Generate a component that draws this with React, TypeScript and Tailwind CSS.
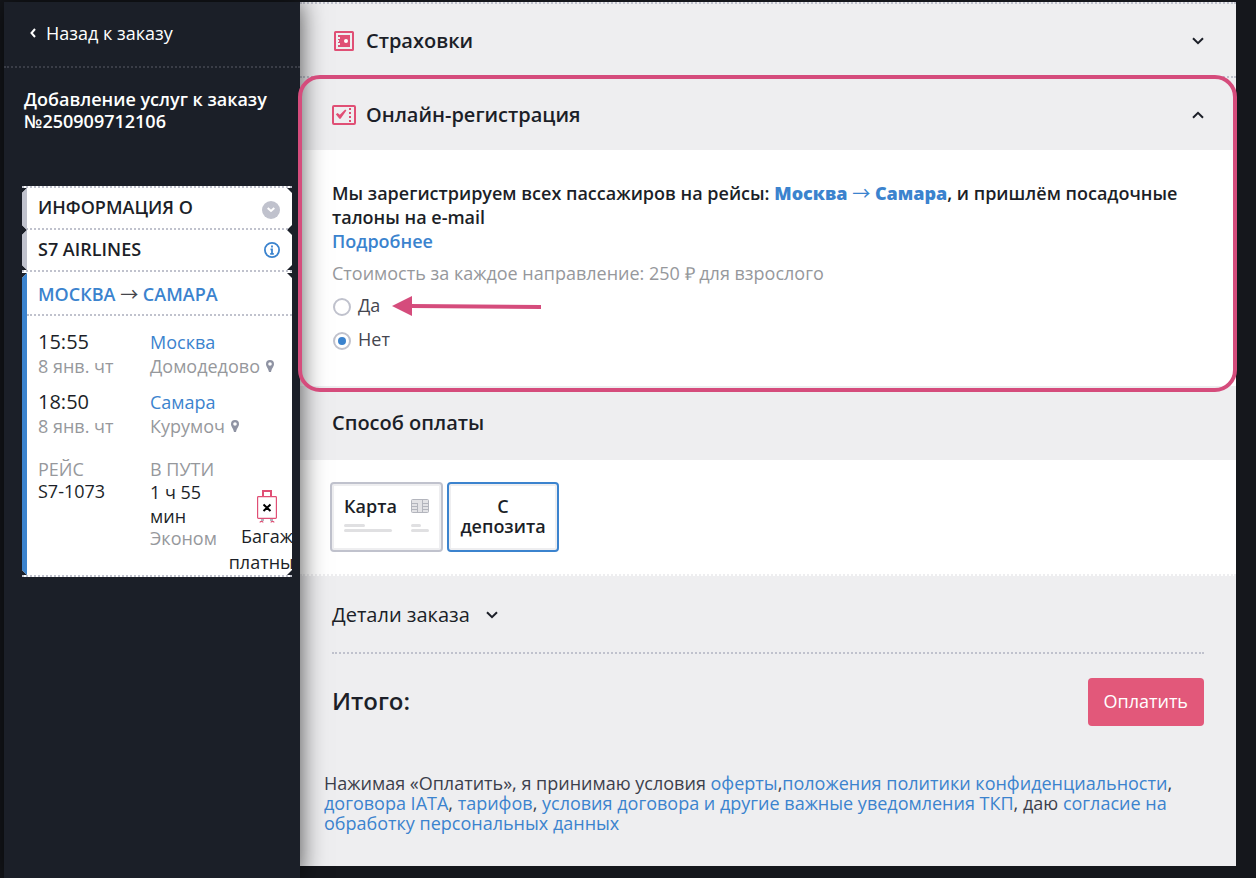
import { useState, type ReactNode } from "react";

function Chevron({ className = "" }: { className?: string }) {
  return (
    <svg viewBox="0 0 12 8" className={className} fill="none" stroke="currentColor" strokeWidth="2">
      <path d="M1 1.2l5 5 5-5" />
    </svg>
  );
}

function InsuranceIcon() {
  return (
    <svg viewBox="0 0 20 20" className="h-5 w-5">
      <rect x="1" y="1" width="18" height="18" rx="0.6" fill="none" stroke="#e04f75" strokeWidth="2" />
      <path d="M4 4h12v12H4v-2h2v-2H4v-1h1V9H4V8h2V6H4z" fill="#e04f75" />
      <circle cx="12" cy="10" r="2" fill="#fff" />
    </svg>
  );
}

function CheckInIcon() {
  return (
    <svg viewBox="0 0 24 20" className="h-5 w-6">
      <rect x="1" y="1" width="22" height="18" rx="1" fill="none" stroke="#e04f75" strokeWidth="2" />
      <path d="M3.8 9.3l1.8-1.2L7.8 9.8l5.400-5.200 1.200.8-5.800 8.400H7.400z" fill="#e04f75" />
      <path d="M17 3h2v2h-2zM17 7h2v2h-2zM17 11h2v2h-2zM17 15h2v2h-2z" fill="#e04f75" />
    </svg>
  );
}

function PinIcon() {
  return (
    <svg viewBox="0 0 8 12" className="h-3 w-2 shrink-0">
      <path
        fillRule="evenodd"
        d="M4 0a4 4 0 0 0-4 4c0 2.600 2 3.800 3 8h2c1-4.200 3-5.400 3-8a4 4 0 0 0-4-4zm0 2.200a1.800 1.800 0 1 1 0 3.600 1.800 1.800 0 0 1 0-3.600z"
        fill="#8f93a3"
      />
    </svg>
  );
}

function BaggageIcon() {
  return (
    <svg viewBox="0 0 20 33" className="h-[33px] w-5 shrink-0" fill="none">
      <path d="M6 6V1h8v5" stroke="#e04f75" strokeWidth="2" />
      <rect x="0.6" y="6.6" width="18.8" height="21.8" rx="0.8" stroke="#e04f75" strokeWidth="1.2" />
      <path d="M3 32.500c0-1.600 3-1.600 3 0M14 32.500c0-1.600 3-1.600 3 0" stroke="#e04f75" strokeWidth="1.2" />
      <path d="M4 30h3M13 30h3" stroke="#9a9aa8" strokeWidth="1.6" />
      <path d="M6.500 14.600l7 6.400M13.500 14.600l-7 6.400" stroke="#000" strokeWidth="2" />
    </svg>
  );
}

function ChipIcon() {
  return (
    <svg viewBox="0 0 18 14" className="h-[14px] w-[18px] shrink-0" fill="none" stroke="#b3b5bd">
      <rect x="0.5" y="0.5" width="17" height="13" rx="1" fill="#e3e3e6" />
      <path d="M6.500 4v9.500M11.500 0.500v13M0.500 4.500h6M0.500 7.500h6M0.500 10.500h6M11.500 4.500h6M11.500 7.500h6M11.500 10.500h6" />
    </svg>
  );
}

// Open Sans has no arrow glyph
function RouteArrow({ className = "" }: { className?: string }) {
  return <span className={`font-['Noto_Sans_CJK_SC',sans-serif] leading-none font-normal ${className}`}>→</span>;
}

const DOTS = "border-dotted border-[#c0c2cd]";
const NOTCHED =
  "[clip-path:polygon(0_5px,5px_0,calc(100%-5px)_0,100%_5px,100%_calc(100%-5px),calc(100%-5px)_100%,5px_100%,0_calc(100%-5px))]";

function Stop({ time, city, airport }: { time: string; city: string; airport: string }) {
  return (
    <div className="flex h-[60px]">
      <div className="w-28 shrink-0">
        <div className="text-xl leading-6 text-[#1c1f28]">{time}</div>
        <div className="leading-6 text-[#96989c]">8 янв. чт</div>
      </div>
      <div>
        <a href="#city" className="block leading-6 text-[#3b83ce]">
          {city}
        </a>
        <div className="flex items-center gap-1.5 leading-6 text-[#96989c]">
          {airport}
          <PinIcon />
        </div>
      </div>
    </div>
  );
}

function Ticket() {
  return (
    <div className="mr-2 ml-[18px]">
      <div className={`border-t-2 bg-white ${DOTS}`} />
      <div
        className={`flex h-[42px] items-center justify-between border-b-2 border-l-[5px] bg-white pr-3 pb-0.5 pl-[11px] ${NOTCHED} [border-bottom-style:dotted] border-[#c0c2cd]`}
      >
        <span className="font-semibold text-[#1c1f28]">ИНФОРМАЦИЯ О</span>
        <button
          type="button"
          aria-label="Развернуть"
          className="mt-1.5 flex h-[18px] w-[18px] items-center justify-center rounded-full bg-[#c0c2cd] text-white"
        >
          <svg viewBox="0 0 8 6" className="h-[6px] w-2" fill="none" stroke="currentColor" strokeWidth="2">
            <path d="M0.700 1l3.300 3 3.300-3" />
          </svg>
        </button>
      </div>
      <div
        className={`flex h-10 items-center justify-between border-l-[5px] border-[#c0c2cd] bg-white pr-3 pb-0.5 pl-[11px] ${NOTCHED}`}
      >
        <span className="font-semibold text-[#1c1f28]">S7 AIRLINES</span>
        <button type="button" aria-label="Информация" className="pt-0.5">
          <svg viewBox="0 0 16 16" className="h-4 w-4" fill="none" stroke="#3b83ce" strokeWidth="1.8">
            <circle cx="8" cy="8" r="7.1" />
            <path d="M8 3.500v2M6.500 7.300H8v4.200M6.200 11.800h3.600" />
          </svg>
        </button>
      </div>
      <div className={`h-[3px] border-t-2 bg-white ${DOTS}`} />
      <div className={`border-l-[5px] border-[#3b83ce] bg-white ${NOTCHED}`}>
        <div className={`flex h-[43px] items-center border-b-2 pl-[11px] ${DOTS}`}>
          <span className="font-semibold text-[#3b83ce]">
            МОСКВА <RouteArrow className="text-[#45464c]" /> САМАРА
          </span>
        </div>
        <div className="overflow-hidden pt-[14px] pl-[11px]">
          <Stop time="15:55" city="Москва" airport="Домодедово" />
          <Stop time="18:50" city="Самара" airport="Курумоч" />
          <div className="flex h-[125px] pt-2 text-[#1c1f28]">
            <div className="w-28 shrink-0">
              <div className="leading-[22px] text-[#96989c]">РЕЙС</div>
              <div className="leading-[22px]">S7-1073</div>
            </div>
            <div className="w-[92px] shrink-0 pr-4">
              <div className="leading-[22px] text-[#96989c]">В ПУТИ</div>
              <div className="leading-6">1 ч 55 мин</div>
              <div className="leading-5 text-[#96989c]">Эконом</div>
            </div>
            <div className="flex w-[50px] shrink-0 flex-col items-center pt-8 leading-[26px]">
              <BaggageIcon />
              <span>Багаж</span>
              <span>платный</span>
            </div>
          </div>
        </div>
      </div>
      <div className={`border-t-2 bg-white ${DOTS}`} />
    </div>
  );
}

function SectionHeader({ icon, title, open }: { icon: ReactNode; title: string; open: boolean }) {
  return (
    <button type="button" aria-expanded={open} className="flex h-[72px] w-full items-center px-8 pt-0.5 text-left">
      <span className="mr-2.5 flex w-6 justify-center">{icon}</span>
      <span className="flex-1 text-xl font-semibold">{title}</span>
      <Chevron className={`h-2 w-3 ${open ? "rotate-180" : ""}`} />
    </button>
  );
}

function TermsLink({ children }: { children: ReactNode }) {
  return (
    <a href="#terms" className="text-[#3b83ce]">
      {children}
    </a>
  );
}

const OPTIONS = [
  { value: "yes", label: "Да" },
  { value: "no", label: "Нет" },
];

export default function App() {
  const [checkIn, setCheckIn] = useState("no");

  return (
    <div className="flex min-h-screen bg-[#15171c] pt-0.5 pl-1 font-['Open_Sans',sans-serif] text-lg text-[#1c1f28]">
      <aside className="relative z-10 w-[296px] shrink-0 bg-[#1b1f28] text-white shadow-[0_0_24px_rgba(0,0,0,0.7)]">
        <div className="flex h-[66px] items-center border-b-2 border-dotted border-[#3a3d47] pb-0.5 pl-5">
          <a href="#order" className="flex items-center gap-1">
            <span className="flex w-[18px] justify-center">
              <svg viewBox="0 0 6 10" className="h-[10px] w-[6px]" fill="none" stroke="currentColor" strokeWidth="2">
                <path d="M5 1L1.500 5 5 9" />
              </svg>
            </span>
            Назад к заказу
          </a>
        </div>
        <h1 className="mb-[54px] px-5 pt-5 leading-[22px] font-semibold">
          Добавление услуг к заказу №250909712106
        </h1>
        <Ticket />
      </aside>

      <main className="mr-5 mb-3 min-w-0 flex-1 bg-[#eeeef0]">
        <section className={`border-t-2 ${DOTS}`}>
          <SectionHeader icon={<InsuranceIcon />} title="Страховки" open={false} />
        </section>

        <section className={`relative border-t-2 ${DOTS}`}>
          <SectionHeader icon={<CheckInIcon />} title="Онлайн-регистрация" open />
          <div className="h-[236px] bg-white px-8 pt-[31px]">
            <p className="leading-6 font-semibold">
              Мы зарегистрируем всех пассажиров на рейсы:{" "}
              <b className="font-extrabold text-[#3b83ce]">
                Москва <RouteArrow /> Самара
              </b>
              , и пришлём посадочные талоны на e-mail
            </p>
            <a href="#more" className="block w-fit leading-6 font-semibold text-[#3b83ce]">
              Подробнее
            </a>
            <p className="mt-2 leading-6 text-[#96989c]">Стоимость за каждое направление: 250 ₽ для взрослого</p>
            <div className="mt-2 flex flex-col gap-2.5">
              {OPTIONS.map((option) => (
                <div key={option.value} className="flex items-center">
                  <label className="flex items-center gap-[7px] pl-px leading-6 text-[#45464f]">
                    <input
                      type="radio"
                      name="check-in"
                      value={option.value}
                      checked={checkIn === option.value}
                      onChange={() => setCheckIn(option.value)}
                      className="mt-1 h-[18px] w-[18px] appearance-none rounded-full border-2 border-[#c0c2cd] bg-white bg-clip-content p-[3px] checked:bg-[#3b83ce]"
                    />
                    {option.label}
                  </label>
                  {option.value === "yes" && (
                    <svg viewBox="0 0 149 20" className="mt-0.5 ml-3 h-5 w-[149px]">
                      <path d="M0 10L20 0v20z" fill="#d54c7c" />
                      <path d="M18 10l131 1" stroke="#d54c7c" strokeWidth="4" />
                    </svg>
                  )}
                </div>
              ))}
            </div>
          </div>
          <div className="pointer-events-none absolute -top-[3px] -right-px -bottom-[6px] -left-0.5 z-20 rounded-[22px] border-4 border-solid border-[#d54c7c]" />
        </section>

        <section>
          <h2 className="flex h-[74px] items-center px-8 text-xl font-semibold">Способ оплаты</h2>
          <div className="flex gap-1 border-b-2 border-dotted border-[#eeeef0] bg-white px-[30px] pt-[22px] pb-[22px]">
            <button
              type="button"
              className="flex h-[70px] w-[113px] flex-col gap-1.5 rounded border-2 border-[#c0c2cd] px-3 pt-2.5 inset-ring-2 inset-ring-[#eeeef0]"
            >
              <span className="flex w-full items-center justify-between leading-6 font-semibold">
                Карта
                <ChipIcon />
              </span>
              <svg viewBox="0 0 85 8" className="h-2 w-[85px]" fill="#e0e0e2">
                <rect width="21" height="3" rx="1.5" />
                <rect y="5" width="48" height="3" rx="1.5" />
                <rect x="67" width="10" height="3" rx="1.5" />
                <rect x="67" y="5" width="18" height="3" rx="1.5" />
              </svg>
            </button>
            <button
              type="button"
              className="h-[70px] w-28 rounded border-2 border-[#3b83ce] px-2 pb-0.5 leading-5 font-semibold inset-ring-2 inset-ring-[#eeeef0]"
            >
              С депозита
            </button>
          </div>
        </section>

        <section className="px-8">
          <button type="button" className={`flex h-[78px] w-full items-center gap-4 border-b-2 pt-0.5 text-xl ${DOTS}`}>
            Детали заказа
            <Chevron className="h-2 w-3" />
          </button>
          <div className="flex items-center justify-between pt-6">
            <h2 className="pb-0.5 text-2xl font-semibold">Итого:</h2>
            <button type="button" className="h-12 rounded bg-[#e2587a] px-4 pb-0.5 text-white">
              Оплатить
            </button>
          </div>
        </section>
        <p className="px-6 pt-[47px] pb-[33px] leading-5 text-[#3c3f4c]">
          Нажимая «Оплатить», я принимаю условия <TermsLink>оферты</TermsLink>,
          <TermsLink>положения политики конфиденциальности</TermsLink>, <TermsLink>договора IATA</TermsLink>,{" "}
          <TermsLink>тарифов</TermsLink>, <TermsLink>условия договора и другие важные уведомления ТКП</TermsLink>, даю{" "}
          <TermsLink>согласие на обработку персональных данных</TermsLink>
        </p>
      </main>
    </div>
  );
}
